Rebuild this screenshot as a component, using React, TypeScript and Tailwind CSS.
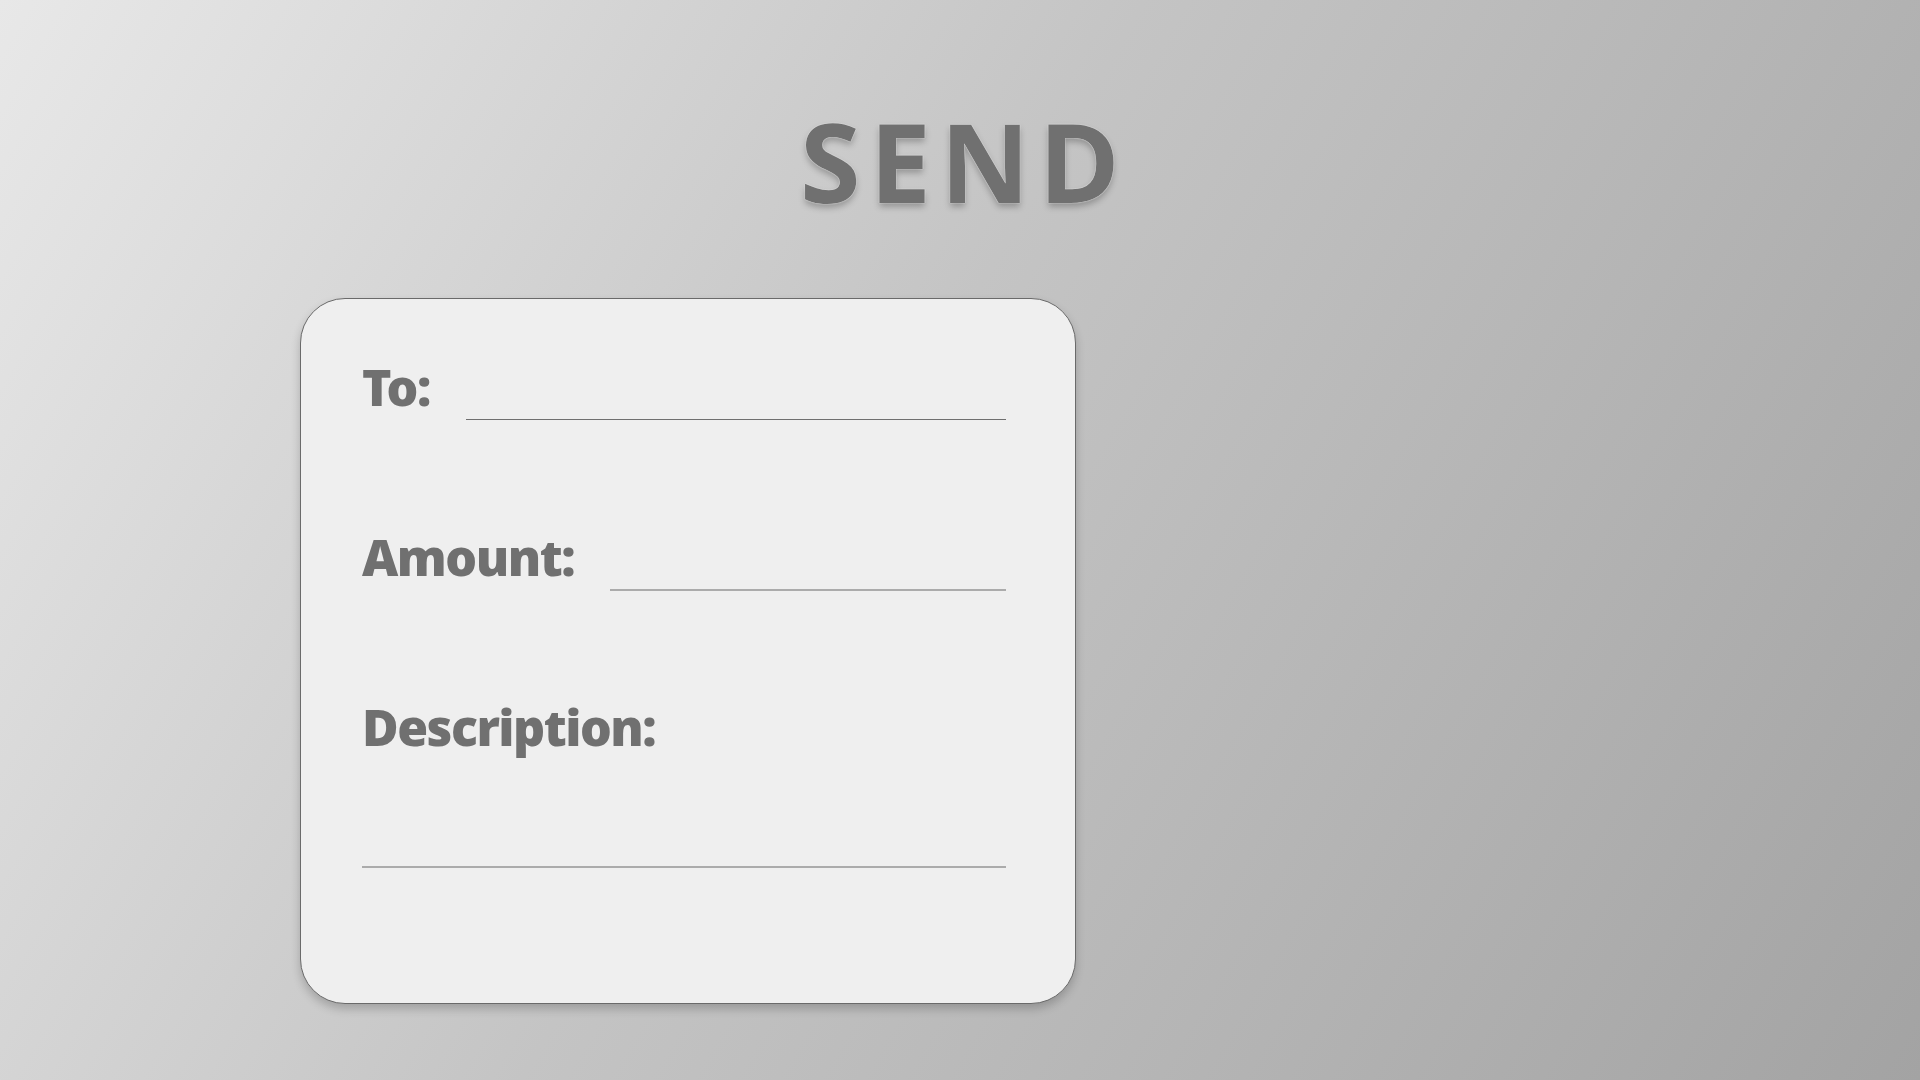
const fields = [
  { label: 'To:', lineClass: 'mb-[1px] h-px bg-[#6f6f6f]' },
  { label: 'Amount:', lineClass: 'mb-0 h-[2px] bg-[#ababab]' },
];

function App() {
  return (
    <div className="min-h-screen w-full bg-[linear-gradient(120deg,#e8e8e8_0%,#c4c4c4_45%,#a3a3a3_100%)] font-['Noto_Sans',sans-serif]">
      <div className="flex justify-center pt-[95px]">
        <h1 className="pl-[9px] font-['Open_Sans',sans-serif] text-[110px] font-bold leading-[130px] tracking-[9px] text-[#707070] [text-shadow:0_0_1px_#f2f2f2,0_0_1px_#f2f2f2,0_4px_6px_rgba(0,0,0,0.25)]">
          SEND
        </h1>
      </div>

      <div className="ml-[300px] mt-[73px] flex h-[706px] w-[776px] flex-col rounded-[45px] border border-[#6a6a6a] bg-[#efefef] pl-[61px] pr-[69px] pt-[62px] shadow-[0_5px_10px_rgba(0,0,0,0.2)]">
        {fields.map((field, i) => (
          <div key={field.label} className={`flex h-[60px] items-end ${i === 0 ? 'mb-[110px]' : 'mb-[106px]'}`}>
            <span className="pb-[4px] text-[50px] font-black leading-[60px] tracking-[-1.5px] text-[#707070]">{field.label}</span>
            <div className={`ml-[36px] flex-1 ${field.lineClass}`} />
          </div>
        ))}
        <span className="text-[50px] font-black leading-[60px] tracking-[-1.5px] text-[#707070]">Description:</span>
        <div className="mt-[109px] h-[2px] bg-[#ababab]" />
      </div>
    </div>
  );
}

export default App;
